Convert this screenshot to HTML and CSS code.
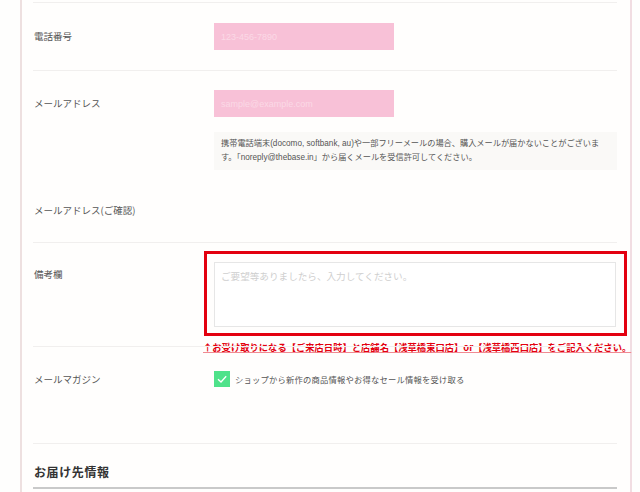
FILE: index.html
```html
<!DOCTYPE html>
<html lang="ja">
<head>
<meta charset="utf-8">
<link rel="stylesheet" href="styles.css">
</head>
<body>
<div class="card">
  <div class="row row-tel">
    <div class="label">電話番号</div>
    <div class="field"><input class="pink-input" type="text" placeholder="123-456-7890"></div>
  </div>
  <div class="row row-mail">
    <div class="label label-input">メールアドレス</div>
    <div class="field">
      <input class="pink-input" type="text" placeholder="sample@example.com">
      <p class="note">携帯電話端末(docomo, softbank, au)や一部フリーメールの場合、購入メールが届かないことがございま<br>す。「noreply@thebase.in」から届くメールを受信許可してください。</p>
    </div>
  </div>
  <div class="row row-confirm">
    <div class="label">メールアドレス(ご確認)</div>
  </div>
  <div class="row row-remarks">
    <div class="label label-area">備考欄</div>
    <div class="field"><textarea class="remarks" placeholder="ご要望等ありましたら、入力してください。"></textarea></div>
    <div class="annot-box"></div>
    <div class="annot-text">↑お受け取りになる【ご来店日時】と店舗名【浅草橋東口店】or【浅草橋西口店】をご記入ください。</div>
  </div>
  <div class="row row-magazine">
    <div class="label label-check">メールマガジン</div>
    <div class="field check-field">
      <span class="checkbox"><svg width="16" height="16" viewBox="0 0 16 16"><path d="M4 8.2 L7 11 L12.2 5.2" fill="none" stroke="#fff" stroke-width="1.3"/></svg></span>
      <span class="check-text">ショップから新作の商品情報やお得なセール情報を受け取る</span>
    </div>
  </div>
  <div class="row row-heading">
    <h2 class="heading">お届け先情報</h2>
  </div>
</div>
</body>
</html>
```
FILE: styles.css
```css
* { box-sizing: border-box; }
html, body { margin: 0; padding: 0; background: #fefefd; }
body {
  font-family: "Noto Sans CJK JP", "Liberation Sans", sans-serif;
  color: #555;
  overflow: hidden;
  height: 492px;
}
.card {
  margin-left: 20px;
  width: 612px;
  height: 492px;
  padding: 2px 13px 0 11px;
  border-left: 2px solid #eee0e0;
  border-right: 2px solid #f1dde2;
  background: #fffefd;
}
.row {
  position: relative;
  display: flex;
  align-items: flex-start;
  border-top: 1px solid #f1efee;
}
.label {
  width: 181px;
  flex-shrink: 0;
  font-size: 9.5px;
  color: #555;
  padding-left: 1px;
}
.field { flex: 1; min-width: 0; }
.row-tel { padding: 20px 0; align-items: center; }
.row-tel .label { line-height: 27px; }
.row-mail { padding-top: 19px; }
.label-input { line-height: 27px; }
.pink-input {
  display: block;
  width: 180px;
  height: 27px;
  border: none;
  background: #f8c1d7;
  padding: 0 7px;
  font-family: "Liberation Sans", sans-serif;
  font-size: 9px;
  outline: none;
}
.pink-input::placeholder { color: #fbd9e6; }
.note {
  margin: 15px 0 0;
  background: #faf9f7;
  padding: 5px 7px;
  font-family: "Liberation Sans", "Noto Sans CJK JP", sans-serif;
  font-size: 8.2px;
  line-height: 14px;
  color: #555;
  white-space: nowrap;
  overflow: hidden;
}
.row-confirm { border-top: none; padding: 33px 0 25px; }
.row-confirm .label { line-height: 14px; width: auto; }
.row-remarks { padding: 19px 0; }
.label-area { line-height: 24px; }
.remarks {
  display: block;
  width: 402px;
  height: 65px;
  border: 1px solid #e6e6e6;
  background: #fff;
  padding: 6px 6px;
  resize: none;
  font-family: "Noto Sans CJK JP", sans-serif;
  font-size: 9.6px;
  line-height: 14px;
  outline: none;
}
.remarks::placeholder { color: #cfcfcf; }
.annot-box {
  position: absolute;
  left: 171px;
  top: 8px;
  width: 423px;
  height: 85px;
  border: 3px solid #e3000f;
}
.annot-text {
  position: absolute;
  left: 170px;
  top: 97px;
  white-space: nowrap;
  font-size: 9.3px;
  font-weight: bold;
  line-height: 14px;
  color: #e3000f;
  text-decoration: underline;
  text-decoration-color: #f08a92;
}
.row-magazine { padding: 24px 0 56px; }
.label-check { line-height: 16px; }
.check-field { display: flex; align-items: center; gap: 5px; }
.checkbox {
  width: 16px;
  height: 16px;
  background: #4fe28a;
  display: block;
}
.checkbox svg { display: block; }
.check-text {
  font-size: 8.3px;
  letter-spacing: 0.2px;
  color: #555;
  line-height: 16px;
}
.row-heading {
  padding: 19px 0 6px;
  border-bottom: 2px solid #c9c9c9;
}
.heading {
  margin: 0;
  font-size: 12px;
  line-height: 18px;
  font-weight: bold;
  color: #333;
  letter-spacing: 0.6px;
  padding-left: 1px;
}
```
